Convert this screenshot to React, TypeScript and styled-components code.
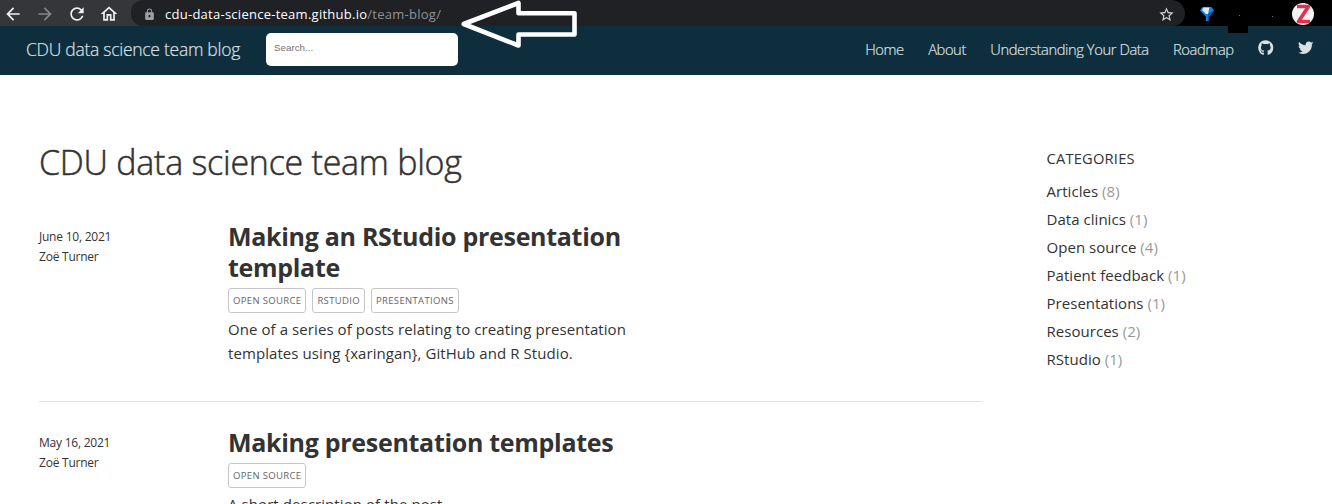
import React from "react";
import styled, { createGlobalStyle } from "styled-components";
import { MdArrowBack, MdArrowForward, MdRefresh, MdOutlineHome, MdLock, MdStarBorder } from "react-icons/md";
import { FaGithub, FaTwitter } from "react-icons/fa";

const GlobalStyle = createGlobalStyle`
  *, *::before, *::after { box-sizing: border-box; }
  html, body { margin: 0; height: 100%; background: #fff; overflow: hidden; }
  body { font-family: "Open Sans", "Noto Sans", sans-serif; color: #333; }
  h1, h2, p, ul { margin: 0; padding: 0; }
  svg { display: block; }
`;

const Window = styled.div`
  position: relative;
  width: 1332px;
  height: 504px;
  overflow: hidden;
`;

const Toolbar = styled.div`
  display: flex;
  height: 26px;
  background: #000;
`;

const Controls = styled.div`
  display: flex;
  align-items: center;
  gap: 13px;
  width: 131px;
  padding: 2px 0 0 3px;
  background: #35363a;
  color: #f1f1f2;
`;

const ControlIcon = styled.span<{ $dim?: boolean }>`
  width: 19px;
  font-size: 20px;
  color: ${(p) => (p.$dim ? "#85868a" : "inherit")};
`;

const AddressWrap = styled.div`
  width: 1054px;
  background: linear-gradient(90deg, #35363a 50%, #000 50%);
`;

const AddressBar = styled.div`
  display: flex;
  align-items: center;
  height: 26px;
  padding: 2px 10px 0 12px;
  border-radius: 13px 15px 13px 13px;
  background: #202124;
  color: #9aa0a6;
`;

const Url = styled.span`
  flex: 1;
  margin-left: 9px;
  font-size: 13px;
  line-height: 20px;
  letter-spacing: 0.26px;
  color: #8e9297;
`;

const Host = styled.span`
  color: #fff;
`;

const Extensions = styled.div`
  display: flex;
  align-items: center;
  justify-content: space-between;
  flex: 1;
  padding: 1px 18px 0 14px;
`;

const NavBar = styled.header`
  display: flex;
  align-items: center;
  height: 49px;
  padding: 0 19px 4px 26px;
  background: #0f2e3d;
  color: #dbe0e3;
`;

const Brand = styled.span`
  width: 240px;
  font-size: 17.5px;
  font-weight: 300;
  letter-spacing: -0.27px;
  -webkit-text-stroke: 0.2px;
  white-space: nowrap;
`;

const Search = styled.input`
  width: 192px;
  height: 33px;
  margin-top: 2px;
  padding: 0 8px 5px;
  border: 0;
  border-radius: 5px;
  background: #fff;
  font: 9.8px "Liberation Sans", Arial, sans-serif;
  &::placeholder { color: #757575; opacity: 1; }
`;

const NavLinks = styled.nav`
  display: flex;
  align-items: center;
  gap: 24px;
  margin-left: auto;
  font-size: 14.7px;
  font-weight: 300;
  letter-spacing: -0.4px;
  -webkit-text-stroke: 0.2px;
`;

const NavLink = styled.span`
  padding-right: 0.4px;
  white-space: nowrap;
`;

const NavIcon = styled.span`
  margin-top: -2px;
  font-size: 15.5px;
`;

const Main = styled.main`
  display: flex;
  padding: 0 39px;
`;

const Posts = styled.section`
  width: 944px;
  padding-top: 63px;
`;

const PageTitle = styled.h1`
  font-size: 34px;
  font-weight: 300;
  line-height: 48px;
  letter-spacing: -0.26px;
  -webkit-text-stroke: 0.5px;
`;

const Post = styled.article`
  display: flex;
  height: 180px;
  margin-top: 36px;
  border-bottom: 1px solid #e2e2e2;

  & + & { margin-top: 26px; }
`;

const Meta = styled.div`
  width: 189px;
  padding-top: 5px;
  font-size: 12px;
  line-height: 19.5px;
  letter-spacing: -0.23px;
`;

const Summary = styled.div`
  width: 420px;
  margin-top: -1px;
`;

const PostTitle = styled.h2`
  font-size: 25px;
  font-weight: 700;
  line-height: 31px;
  letter-spacing: -0.3px;
`;

const Tags = styled.div`
  display: flex;
  gap: 6px;
  margin-top: 5px;
`;

const Tag = styled.span`
  height: 25px;
  padding: 0 4px;
  border: 1px solid #c6c6c6;
  border-radius: 3px;
  font-size: 9.5px;
  line-height: 23px;
  letter-spacing: 0.34px;
  text-transform: uppercase;
  color: #666;
`;

const Description = styled.p`
  margin-top: 4px;
  font-size: 15px;
  line-height: 24px;
  letter-spacing: 0.08px;
  white-space: nowrap;
`;

const Sidebar = styled.aside`
  margin-left: 63.5px;
  padding-top: 72px;
  font-size: 15px;
  letter-spacing: 0.04px;
`;

const SidebarTitle = styled.div`
  height: 30px;
  font-size: 14.7px;
  line-height: 23px;
  letter-spacing: 0.2px;
`;

const Category = styled.div`
  line-height: 28px;
  white-space: nowrap;
`;

const Count = styled.span`
  color: #999;
`;

const PointerArrow = styled.svg`
  position: absolute;
  left: 455px;
  top: 0;
`;

const Smudge = styled.div`
  position: absolute;
  left: 1228px;
  top: 26px;
  width: 20px;
  height: 7px;
  background: #000;
`;

const posts = [
  {
    date: "June 10, 2021",
    title: ["Making an RStudio presentation", "template"],
    tags: ["Open source", "RStudio", "Presentations"],
    text: ["One of a series of posts relating to creating presentation", "templates using {xaringan}, GitHub and R Studio."],
  },
  {
    date: "May 16, 2021",
    title: ["Making presentation templates"],
    tags: ["Open source"],
    text: ["A short description of the post."],
  },
];

const categories: [string, number][] = [
  ["Articles", 8],
  ["Data clinics", 1],
  ["Open source", 4],
  ["Patient feedback", 1],
  ["Presentations", 1],
  ["Resources", 2],
  ["RStudio", 1],
];

const Lines = ({ lines }: { lines: string[] }) => (
  <>
    {lines.map((line, i) => (
      <React.Fragment key={line}>
        {i > 0 && <br />}
        {line}
      </React.Fragment>
    ))}
  </>
);

export default function App() {
  return (
    <Window>
      <GlobalStyle />
      <Toolbar>
        <Controls>
          <ControlIcon><MdArrowBack /></ControlIcon>
          <ControlIcon $dim><MdArrowForward /></ControlIcon>
          <ControlIcon><MdRefresh /></ControlIcon>
          <ControlIcon><MdOutlineHome /></ControlIcon>
        </Controls>
        <AddressWrap>
          <AddressBar>
            <MdLock size={13} />
            <Url><Host>cdu-data-science-team.github.io</Host>/team-blog/</Url>
            <MdStarBorder size={17} color="#d5d7da" />
          </AddressBar>
        </AddressWrap>
        <Extensions>
          <svg width="16" height="16" viewBox="0 0 16 16">
            <path d="M3.5 1h9L15 4.500 10 10.500V15H7v-4.500L1 4.500z" fill="#1583d8" />
            <path d="M4.500 1.500h6L9 8H7L3 4z" fill="#d3f1ff" />
            <path d="M9 8l6-3.500-5 6V15H8.500z" fill="#0759a8" />
          </svg>
          <svg width="50" height="20" viewBox="0 0 50 20">
            <path d="M10 11h1v1h-1zM43 12h1v1h-1zM50 4h1v1h-1z" fill="#777" />
          </svg>
          <svg width="22" height="22" viewBox="0 0 22 22">
            <circle cx="11" cy="11" r="11" fill="#f4f4f4" />
            <path d="M5 3.500h11.500L6.500 18.500h11.500" fill="none" stroke="#e3304f" strokeWidth="3.600" strokeLinejoin="round" />
          </svg>
        </Extensions>
      </Toolbar>
      <NavBar>
        <Brand>CDU data science team blog</Brand>
        <Search placeholder="Search..." />
        <NavLinks>
          <NavLink>Home</NavLink>
          <NavLink>About</NavLink>
          <NavLink>Understanding Your Data</NavLink>
          <NavLink>Roadmap</NavLink>
          <NavIcon><FaGithub /></NavIcon>
          <NavIcon><FaTwitter /></NavIcon>
        </NavLinks>
      </NavBar>
      <Main>
        <Posts>
          <PageTitle>CDU data science team blog</PageTitle>
          {posts.map((post) => (
            <Post key={post.date}>
              <Meta>{post.date}<br />Zoë Turner</Meta>
              <Summary>
                <PostTitle><Lines lines={post.title} /></PostTitle>
                <Tags>{post.tags.map((tag) => <Tag key={tag}>{tag}</Tag>)}</Tags>
                <Description><Lines lines={post.text} /></Description>
              </Summary>
            </Post>
          ))}
        </Posts>
        <Sidebar>
          <SidebarTitle>CATEGORIES</SidebarTitle>
          {categories.map(([name, count]) => (
            <Category key={name}>{name} <Count>({count})</Count></Category>
          ))}
        </Sidebar>
      </Main>
      <Smudge />
      <PointerArrow width="130" height="52" viewBox="0 0 130 52">
        <path d="M8.700 24L63.500 3V13.200H119.500V34.500H63.500V45.500Z" fill="none" stroke="#fff" strokeWidth="4.600" strokeLinejoin="round" />
      </PointerArrow>
    </Window>
  );
}
